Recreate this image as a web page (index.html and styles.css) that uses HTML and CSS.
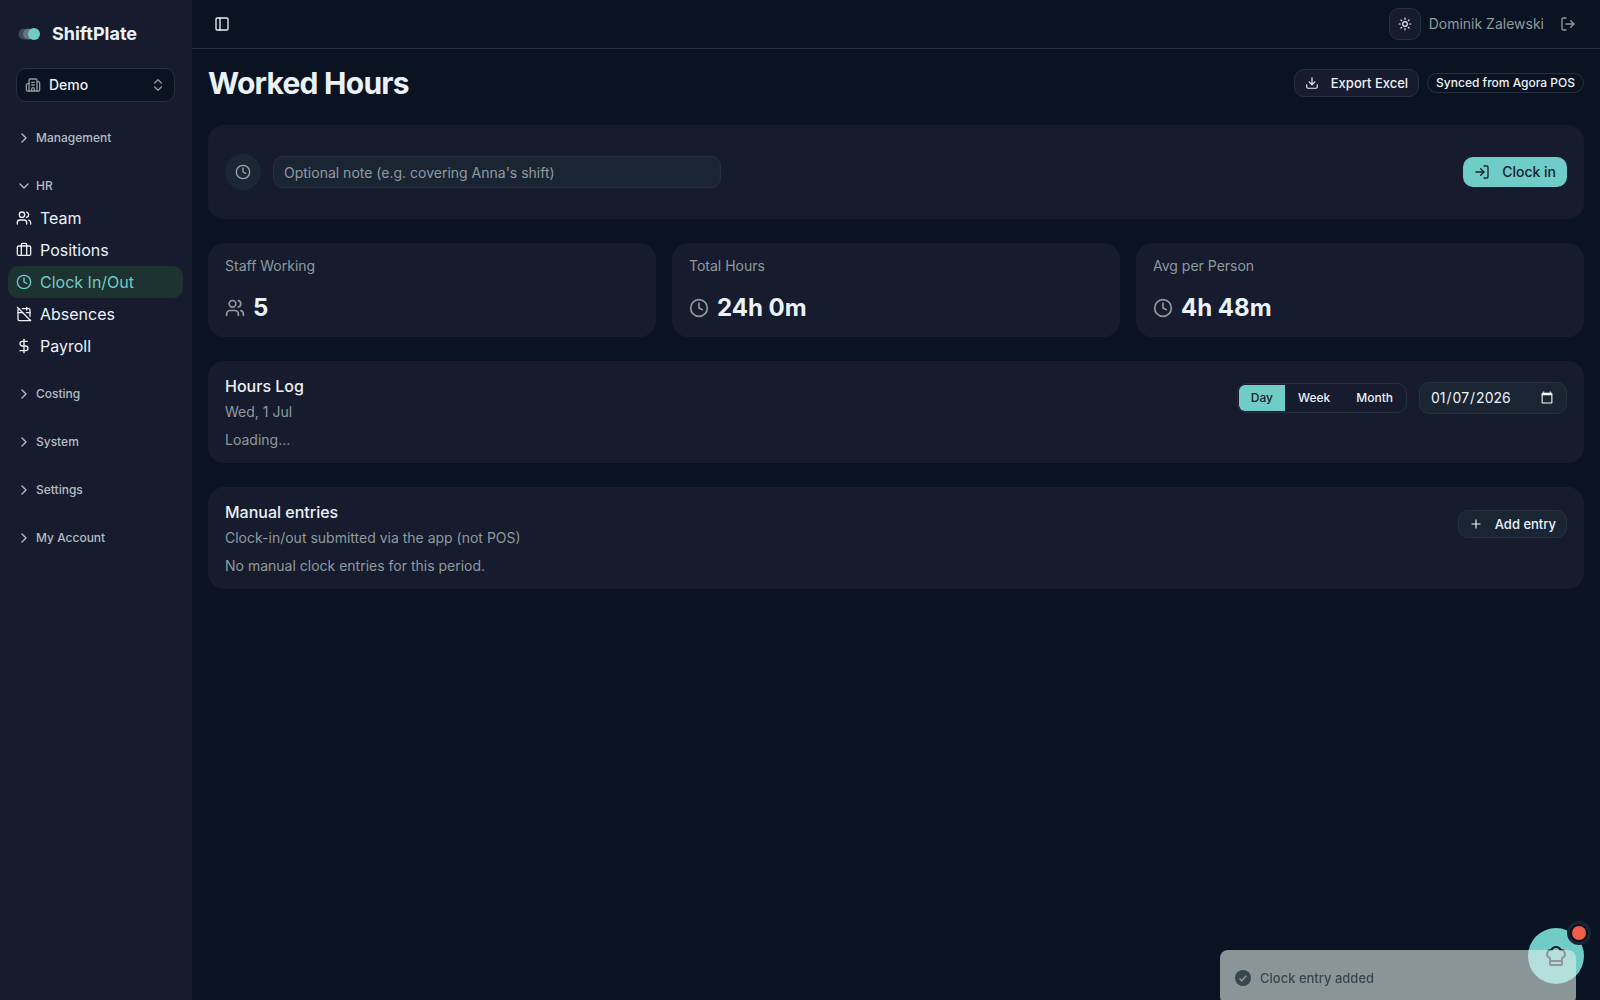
FILE: index.html
```html
<!DOCTYPE html>
<html lang="en">
<head>
  <meta charset="UTF-8">
  <meta name="viewport" content="width=device-width, initial-scale=1">
  <title>Worked Hours - ShiftPlate</title>
  <link rel="stylesheet" href="styles.css">
</head>
<body>
  <!-- shared icons -->
  <svg class="sprite" aria-hidden="true">
    <symbol id="clock" viewBox="0 0 24 24"><circle cx="12" cy="12" r="10"/><path d="M12 6v6l4 2"/></symbol>
    <symbol id="users" viewBox="0 0 24 24"><path d="M16 21v-2a4 4 0 0 0-4-4H6a4 4 0 0 0-4 4v2"/><circle cx="9" cy="7" r="4"/><path d="M22 21v-2a4 4 0 0 0-3-3.87"/><path d="M16 3.13a4 4 0 0 1 0 7.75"/></symbol>
    <symbol id="right" viewBox="0 0 24 24"><path d="m9 18 6-6-6-6"/></symbol>
    <symbol id="down" viewBox="0 0 24 24"><path d="m6 9 6 6 6-6"/></symbol>
  </svg>

  <div class="app">
    <aside class="sidebar">
      <a class="brand" href="#">
        <svg class="logo" viewBox="0 0 22 12" aria-hidden="true">
          <circle cx="6" cy="6" r="5.5" fill="#3c4a54"/>
          <circle cx="10.500" cy="6" r="5.5" fill="#66757e"/>
          <circle cx="16" cy="6" r="6" fill="#70ccc6"/>
        </svg>
        <span>ShiftPlate</span>
      </a>

      <button class="switcher" type="button">
        <svg class="icon muted" viewBox="0 0 24 24"><path d="M10 12h4"/><path d="M10 8h4"/><path d="M14 21v-3a2 2 0 0 0-4 0v3"/><path d="M6 10H4a2 2 0 0 0-2 2v7a2 2 0 0 0 2 2h16a2 2 0 0 0 2-2V9a2 2 0 0 0-2-2h-2"/><path d="M6 21V5a2 2 0 0 1 2-2h8a2 2 0 0 1 2 2v16"/></svg>
        <span>Demo</span>
        <svg class="icon muted" viewBox="0 0 24 24"><path d="m7 15 5 5 5-5"/><path d="m7 9 5-5 5 5"/></svg>
      </button>

      <nav class="nav">
        <button class="group" type="button"><svg class="icon"><use href="#right"/></svg>Management</button>
        <div>
          <button class="group" type="button" aria-expanded="true"><svg class="icon"><use href="#down"/></svg>HR</button>
          <a class="item" href="#"><svg class="icon"><use href="#users"/></svg>Team</a>
          <a class="item" href="#"><svg class="icon" viewBox="0 0 24 24"><path d="M16 20V4a2 2 0 0 0-2-2h-4a2 2 0 0 0-2 2v16"/><rect width="20" height="14" x="2" y="6" rx="2"/></svg>Positions</a>
          <a class="item active" href="#" aria-current="page"><svg class="icon"><use href="#clock"/></svg>Clock In/Out</a>
          <a class="item" href="#"><svg class="icon" viewBox="0 0 24 24"><path d="M4.200 4.200A2 2 0 0 0 3 6v14a2 2 0 0 0 2 2h14a2 2 0 0 0 1.820-1.180"/><path d="M21 15.500V6a2 2 0 0 0-2-2H9.500"/><path d="M16 2v4"/><path d="M3 10h7"/><path d="M21 10h-5.500"/><path d="m2 2 20 20"/></svg>Absences</a>
          <a class="item" href="#"><svg class="icon" viewBox="0 0 24 24"><path d="M12 2v20"/><path d="M17 5H9.500a3.500 3.500 0 0 0 0 7h5a3.500 3.500 0 0 1 0 7H6"/></svg>Payroll</a>
        </div>
        <button class="group" type="button"><svg class="icon"><use href="#right"/></svg>Costing</button>
        <button class="group" type="button"><svg class="icon"><use href="#right"/></svg>System</button>
        <button class="group" type="button"><svg class="icon"><use href="#right"/></svg>Settings</button>
        <button class="group" type="button"><svg class="icon"><use href="#right"/></svg>My Account</button>
      </nav>
    </aside>

    <div class="content">
      <header class="topbar">
        <button class="ghost" type="button" aria-label="Toggle sidebar">
          <svg class="icon" viewBox="0 0 24 24"><rect width="18" height="18" x="3" y="3" rx="2"/><path d="M9 3v18"/></svg>
        </button>
        <div class="account">
          <button class="theme" type="button" aria-label="Toggle theme">
            <svg class="icon small" viewBox="0 0 24 24"><circle cx="12" cy="12" r="4"/><path d="M12 2v2"/><path d="M12 20v2"/><path d="m4.930 4.930 1.410 1.410"/><path d="m17.660 17.660 1.410 1.410"/><path d="M2 12h2"/><path d="M20 12h2"/><path d="m6.340 17.660-1.410 1.410"/><path d="m19.070 4.930-1.410 1.410"/></svg>
          </button>
          <span>Dominik Zalewski</span>
          <button class="ghost muted" type="button" aria-label="Log out">
            <svg class="icon" viewBox="0 0 24 24"><path d="m16 17 5-5-5-5"/><path d="M21 12H9"/><path d="M9 21H5a2 2 0 0 1-2-2V5a2 2 0 0 1 2-2h4"/></svg>
          </button>
        </div>
      </header>

      <main class="page">
        <div class="page-head">
          <h1>Worked Hours</h1>
          <div class="page-actions">
            <button class="btn" type="button">
              <svg class="icon" viewBox="0 0 24 24"><path d="M21 15v4a2 2 0 0 1-2 2H5a2 2 0 0 1-2-2v-4"/><path d="m7 10 5 5 5-5"/><path d="M12 15V3"/></svg>
              Export Excel
            </button>
            <span class="badge">Synced from Agora POS</span>
          </div>
        </div>

        <section class="card clock-card">
          <div class="clock-badge"><svg class="icon"><use href="#clock"/></svg></div>
          <input class="field note" type="text" aria-label="Note" placeholder="Optional note (e.g. covering Anna's shift)">
          <button class="btn primary" type="button">
            <svg class="icon" viewBox="0 0 24 24"><path d="m10 17 5-5-5-5"/><path d="M15 12H3"/><path d="M15 3h4a2 2 0 0 1 2 2v14a2 2 0 0 1-2 2h-4"/></svg>
            Clock in
          </button>
        </section>

        <div class="stats">
          <section class="card stat">
            <p>Staff Working</p>
            <div class="value"><svg class="icon large"><use href="#users"/></svg>5</div>
          </section>
          <section class="card stat">
            <p>Total Hours</p>
            <div class="value"><svg class="icon large"><use href="#clock"/></svg>24h 0m</div>
          </section>
          <section class="card stat">
            <p>Avg per Person</p>
            <div class="value"><svg class="icon large"><use href="#clock"/></svg>4h 48m</div>
          </section>
        </div>

        <section class="card log">
          <div>
            <h2>Hours Log</h2>
            <p>Wed, 1 Jul</p>
            <p class="status">Loading...</p>
          </div>
          <div class="filters">
            <div class="segmented">
              <button class="on" type="button">Day</button>
              <button type="button">Week</button>
              <button type="button">Month</button>
            </div>
            <input class="field date" type="date" aria-label="Date" value="2026-01-07">
          </div>
        </section>

        <section class="card log">
          <div>
            <h2>Manual entries</h2>
            <p>Clock-in/out submitted via the app (not POS)</p>
            <p class="status">No manual clock entries for this period.</p>
          </div>
          <button class="btn add" type="button">
            <svg class="icon" viewBox="0 0 24 24"><path d="M5 12h14"/><path d="M12 5v14"/></svg>
            Add entry
          </button>
        </section>
      </main>
    </div>
  </div>

  <button class="assistant" type="button" aria-label="Open assistant">
    <svg class="icon chef" viewBox="0 0 24 24"><path d="M17 21a1 1 0 0 0 1-1v-5.350c0-.457.316-.844.727-1.041a4 4 0 0 0-2.134-7.589 5 5 0 0 0-9.186 0 4 4 0 0 0-2.134 7.588c.411.198.727.585.727 1.041V20a1 1 0 0 0 1 1Z"/><path d="M6 17h12"/></svg>
    <span class="dot"></span>
  </button>

  <div class="toast" role="status">
    <svg class="toast-icon" viewBox="0 0 20 20"><circle cx="10" cy="10" r="8" fill="#36474f"/><path d="m6.500 10.500 2.300 2.300 4.500-5" fill="none" stroke="#8d9797" stroke-width="1.500"/></svg>
    Clock entry added
  </div>
</body>
</html>
```
FILE: styles.css
```css
:root {
  --bg: #0a1321;
  --panel: #161c2d;
  --field: #1a2534;
  --border: #263140;
  --text: #eaf1f8;
  --muted: #8f9a9f;
  --teal: #70ccc6;
  color-scheme: dark;
}

* {
  box-sizing: border-box;
}

body {
  margin: 0;
  background: var(--bg);
  color: var(--text);
  font: 14px/20px Inter, "Liberation Sans", sans-serif;
  overflow: hidden;
}

h1, h2, p {
  margin: 0;
}

a {
  color: inherit;
  text-decoration: none;
}

button {
  border: 0;
  padding: 0;
  background: none;
  color: inherit;
  font: inherit;
}

.sprite {
  position: absolute;
  width: 0;
  height: 0;
}

.icon {
  flex: none;
  width: 16px;
  height: 16px;
  fill: none;
  stroke: currentColor;
  stroke-width: 2;
  stroke-linecap: round;
  stroke-linejoin: round;
}
.icon.small {
  width: 14px;
  height: 14px;
}
.icon.large {
  width: 20px;
  height: 20px;
  color: var(--muted);
}

.muted {
  color: var(--muted);
}

.app {
  display: flex;
  min-height: 100vh;
}

/* Sidebar */
.sidebar {
  flex: none;
  width: 192px;
  background: var(--panel);
}

.brand {
  display: flex;
  align-items: center;
  gap: 12px;
  height: 68px;
  padding: 0 18px;
  font-size: 18px;
  font-weight: 700;
}
.logo {
  width: 22px;
  height: 12px;
}

.switcher {
  display: flex;
  align-items: center;
  gap: 8px;
  width: 159px;
  height: 34px;
  margin: 0 16px 20px;
  padding: 0 8px;
  border: 1px solid var(--border);
  border-radius: 10px;
  background: var(--bg);
  font-weight: 500;
  text-align: left;
}
.switcher span {
  flex: 1;
}

.nav {
  display: flex;
  flex-direction: column;
  gap: 16px;
  padding: 0 9px 0 8px;
}
.group {
  display: flex;
  align-items: center;
  gap: 4px;
  height: 32px;
  padding: 0 8px;
  color: #b3bcc4;
  font-size: 12px;
  font-weight: 500;
}
.item {
  display: flex;
  align-items: center;
  gap: 8px;
  height: 32px;
  padding: 0 8px;
  border-radius: 10px;
  font-size: 16px;
}
.item.active {
  background: #1d3331;
  color: var(--teal);
}

/* Top bar */
.content {
  flex: 1;
  min-width: 0;
}
.topbar {
  display: flex;
  align-items: center;
  justify-content: space-between;
  height: 49px;
  padding: 0 16px;
  border-bottom: 1px solid var(--border);
}
.ghost {
  display: grid;
  place-items: center;
  width: 28px;
  height: 28px;
}
.account {
  display: flex;
  align-items: center;
  gap: 8px;
  color: var(--muted);
}
.account .ghost {
  width: 32px;
}
.theme {
  display: grid;
  place-items: center;
  width: 32px;
  height: 32px;
  border: 1px solid var(--border);
  border-radius: 10px;
  background: var(--panel);
  color: var(--text);
}

/* Page */
.page {
  display: flex;
  flex-direction: column;
  gap: 24px;
  padding: 16px;
}
.page-head {
  display: flex;
  align-items: center;
  justify-content: space-between;
}
h1 {
  font-size: 30px;
  line-height: 36px;
  font-weight: 700;
  letter-spacing: -0.025em;
}
.page-actions {
  display: flex;
  align-items: center;
  gap: 8px;
}

.btn {
  display: flex;
  align-items: center;
  gap: 12px;
  height: 28px;
  padding: 0 10px;
  border: 1px solid var(--border);
  border-radius: 10px;
  background: var(--panel);
  font-size: 13px;
  font-weight: 500;
}
.btn .icon {
  width: 14px;
  height: 14px;
}
.btn.primary {
  height: 30px;
  padding: 0 11px;
  border: 0;
  background: var(--teal);
  color: #17222e;
  font-size: 14px;
}
.btn.primary .icon {
  width: 16px;
  height: 16px;
}
.btn.add {
  background: var(--field);
}
.badge {
  height: 20px;
  padding: 0 8px;
  border: 1px solid var(--border);
  border-radius: 10px;
  font-size: 12px;
  font-weight: 500;
  line-height: 18px;
}

.card {
  border-radius: 16px;
  background: var(--panel);
}

.field {
  height: 32px;
  padding: 0 10px;
  border: 1px solid var(--border);
  border-radius: 10px;
  background: var(--field);
  color: var(--text);
  font: inherit;
}
.field::placeholder {
  color: var(--muted);
}

.clock-card {
  display: flex;
  align-items: center;
  gap: 12px;
  height: 94px;
  padding: 0 17px;
}
.clock-badge {
  display: grid;
  place-items: center;
  flex: none;
  width: 36px;
  height: 36px;
  border-radius: 50%;
  background: #1c2735;
  color: #9ba5ad;
}
.note {
  width: 448px;
}
.clock-card .btn {
  margin-left: auto;
}

.stats {
  display: grid;
  grid-template-columns: repeat(3, 1fr);
  gap: 16px;
}
.stat {
  height: 94px;
  padding: 13px 17px;
}
.stat p {
  color: var(--muted);
}
.value {
  display: flex;
  align-items: center;
  gap: 8px;
  margin-top: 16px;
  font-size: 24px;
  line-height: 32px;
  font-weight: 700;
}

.log {
  display: flex;
  justify-content: space-between;
  height: 102px;
  padding: 13px 17px;
}
.log h2 {
  font-size: 16px;
  line-height: 24px;
  font-weight: 500;
}
.log p {
  margin-top: 4px;
  color: var(--muted);
}
.log .status {
  margin-top: 8px;
}
.filters {
  display: flex;
  align-items: center;
  gap: 12px;
  height: 48px;
}
.log .add {
  margin-top: 10px;
}

.segmented {
  display: flex;
  height: 30px;
  padding: 1px 0 1px 1px;
  overflow: hidden;
  border: 1px solid var(--border);
  border-radius: 10px;
}
.segmented button {
  padding: 0 13px;
  font-size: 12px;
  font-weight: 500;
}
.segmented .on {
  padding: 0 12px;
  border-radius: 6px 0 0 6px;
  background: var(--teal);
  color: #17222e;
}
.date {
  width: 148px;
}

/* Floating assistant button and toast */
.assistant {
  position: fixed;
  right: 16px;
  bottom: 16px;
  display: grid;
  place-items: center;
  width: 56px;
  height: 56px;
  border-radius: 50%;
  background: var(--teal);
  color: #17182a;
}
.chef {
  width: 24px;
  height: 24px;
}
.dot {
  position: absolute;
  top: -4px;
  right: -4px;
  width: 18px;
  height: 18px;
  border: 2px solid var(--bg);
  border-radius: 50%;
  background: #f05f4a;
  box-shadow: 0 0 0 3px #1a2433;
}

.toast {
  position: fixed;
  right: 24px;
  bottom: -5px;
  display: flex;
  align-items: center;
  gap: 7px;
  width: 356px;
  height: 55px;
  padding: 0 13px;
  border-radius: 8px;
  background: rgba(224, 236, 232, 0.6);
  color: #36474f;
  font-size: 13px;
  font-weight: 500;
}
.toast-icon {
  width: 20px;
  height: 20px;
}
```
